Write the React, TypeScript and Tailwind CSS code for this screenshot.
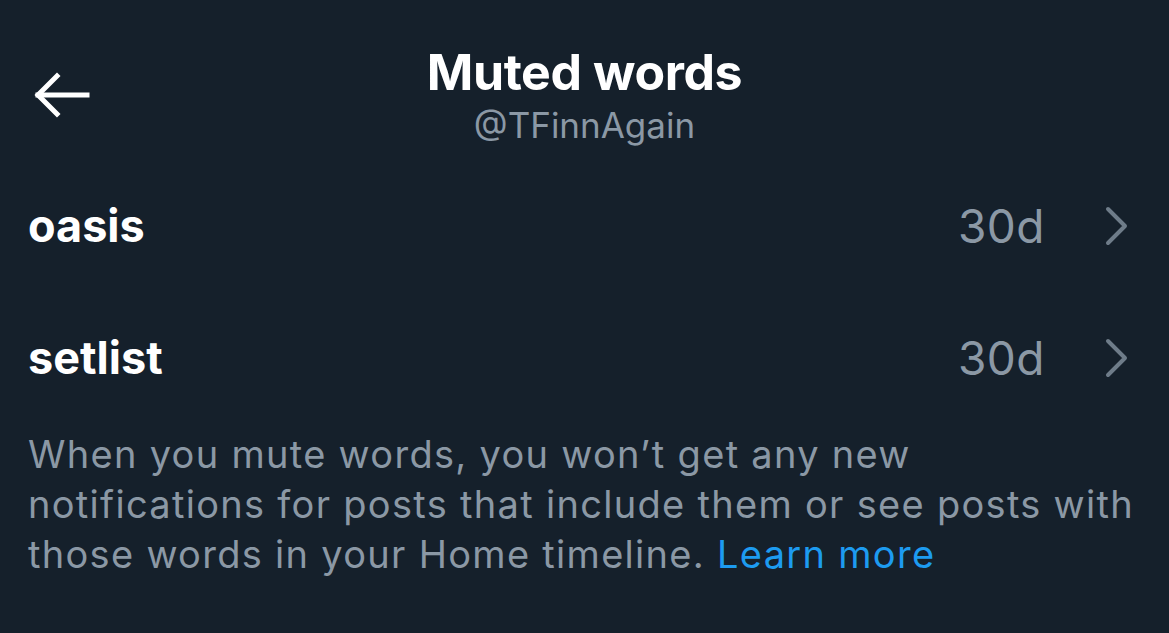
import React from 'react';

const words = [
  { word: 'oasis', duration: '30d' },
  { word: 'setlist', duration: '30d' },
];

const BackArrow = () => (
  <svg width="56" height="48" viewBox="0 0 56 48" fill="none" stroke="white" strokeWidth="5" strokeLinecap="square">
    <path d="M4 24 H53" />
    <path d="M23 5 L4 24 L23 43" />
  </svg>
);

const Chevron = () => (
  <svg width="28" height="40" viewBox="0 0 28 40" fill="none" stroke="#6e7c89" strokeWidth="4" strokeLinecap="round" strokeLinejoin="round">
    <path d="M5 3 L22 20 L5 37" />
  </svg>
);

export default function App() {
  return (
    <div className="w-[1169px] h-[633px] bg-[#15202b] overflow-hidden font-['Inter',sans-serif]">
      {/* Header */}
      <div className="relative pt-[44px]">
        <div className="absolute left-[34px] top-[71px]">
          <BackArrow />
        </div>
        <div className="flex flex-col items-center">
          <h1 className="text-[50px] leading-[56px] font-bold text-white tracking-[-0.4px]">Muted words</h1>
          <p className="mt-[4px] text-[35px] leading-[42px] text-[#8b98a5]">@TFinnAgain</p>
        </div>
      </div>

      {/* Word list */}
      <div className="mt-[14px]">
        {words.map((w) => (
          <div key={w.word} className="h-[132px] flex items-center pl-[28px] pr-[38px]">
            <span className="flex-1 text-[45px] leading-[56px] font-bold text-white">{w.word}</span>
            <span className="text-[46px] leading-[56px] text-[#8b98a5] mr-[58px] tracking-[0.5px]">{w.duration}</span>
            <Chevron />
          </div>
        ))}
      </div>

      {/* Info */}
      <p className="pt-[5px] pl-[28px] pr-[20px] text-[38px] leading-[50px] tracking-[1.3px] text-[#8b98a5]">
        When you mute words, you won’t get any new notifications for posts that include them or see posts with those words in your Home timeline.{' '}
        <span className="text-[#1d9bf0]">Learn more</span>
      </p>
    </div>
  );
}
